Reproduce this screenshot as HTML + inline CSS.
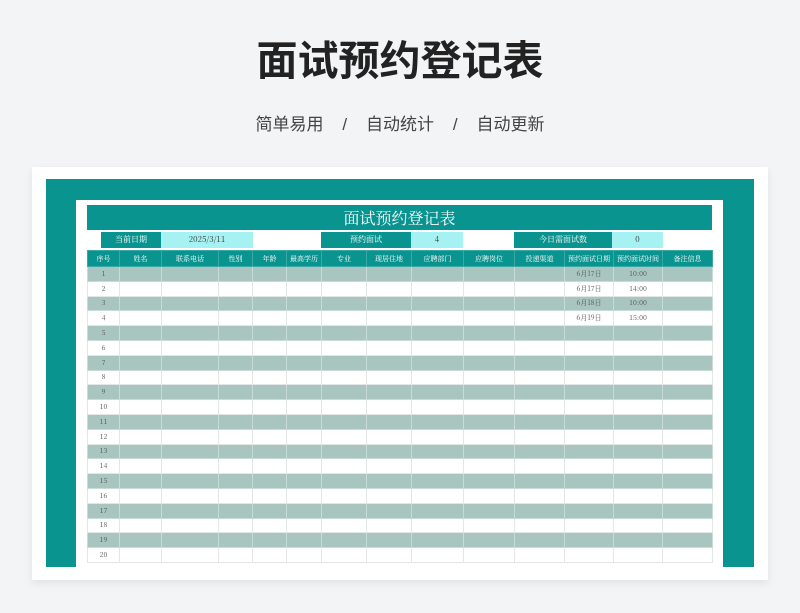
<!DOCTYPE html>
<html><head><meta charset="utf-8"><style>
*{margin:0;padding:0;box-sizing:border-box}
body{width:800px;height:613px;background:#f3f4f6;position:relative;overflow:hidden;font-family:"Liberation Sans","Noto Sans CJK SC",sans-serif}
.t{position:absolute;left:0;width:800px;text-align:center;top:36px;font-size:41px;font-weight:bold;color:#222;line-height:50px;letter-spacing:0px}
.s{position:absolute;left:0;width:800px;text-align:center;top:113px;font-size:17px;color:#444;line-height:24px;word-spacing:0}
.card{position:absolute;left:32px;top:167px;width:736px;height:413px;background:#fff;box-shadow:0 3px 8px rgba(0,0,0,.08)}
.teal{position:absolute;left:46px;top:179px;width:708px;height:388px;background:#0a9490}
.inner{position:absolute;left:76px;top:200px;width:647px;height:380px;background:#fff}
.tb{position:absolute;left:87px;top:205px;width:625px;height:25px;background:#0a9490;color:#fff;font-family:"Noto Serif CJK SC",serif;font-size:16px;text-align:center;line-height:25px}
.b{position:absolute;top:232px;height:16px;font-size:8px;line-height:16px;text-align:center;font-family:"Noto Serif CJK SC",serif}
.d{background:#0a9490;color:#fff}.c{background:#a6f2f2;color:#333}
table{position:absolute;left:87px;top:250px;border-collapse:collapse;table-layout:fixed;width:625px;font-family:"Noto Serif CJK SC",serif;font-size:7px;color:#555}
td,th{border:1px solid #e2e6e5;text-align:center;height:14.8px;padding:0;white-space:nowrap;overflow:hidden}
th{background:#0a9490;color:#fff;font-weight:normal;height:16px;border-color:#3aa9a5}
tr.g td{background:#a8c6bf;border-color:#c8dcd7}
</style></head><body>
<div class="t">面试预约登记表</div>
<div class="s">简单易用 &nbsp;&nbsp;&nbsp;/&nbsp;&nbsp;&nbsp; 自动统计 &nbsp;&nbsp;&nbsp;/&nbsp;&nbsp;&nbsp; 自动更新</div>
<div class="card"></div>
<div class="teal"></div>
<div class="inner"></div>
<div class="tb">面试预约登记表</div>
<div class="b d" style="left:101px;width:60px">当前日期</div>
<div class="b c" style="left:161px;width:92px">2025/3/11</div>
<div class="b d" style="left:321px;width:90px">预约面试</div>
<div class="b c" style="left:411px;width:52px">4</div>
<div class="b d" style="left:514px;width:98px">今日需面试数</div>
<div class="b c" style="left:612px;width:51px">0</div>
<table>
<colgroup><col style="width:32px"><col style="width:42px"><col style="width:57px"><col style="width:34px"><col style="width:34px"><col style="width:35px"><col style="width:45px"><col style="width:45px"><col style="width:52px"><col style="width:51px"><col style="width:50px"><col style="width:49px"><col style="width:49px"><col style="width:50px"></colgroup>
<tr><th>序号</th><th>姓名</th><th>联系电话</th><th>性别</th><th>年龄</th><th>最高学历</th><th>专业</th><th>现居住地</th><th>应聘部门</th><th>应聘岗位</th><th>投递渠道</th><th>预约面试日期</th><th>预约面试时间</th><th>备注信息</th></tr>
<tr class="g"><td>1</td><td></td><td></td><td></td><td></td><td></td><td></td><td></td><td></td><td></td><td></td><td>6月17日</td><td>10:00</td><td></td></tr>
<tr><td>2</td><td></td><td></td><td></td><td></td><td></td><td></td><td></td><td></td><td></td><td></td><td>6月17日</td><td>14:00</td><td></td></tr>
<tr class="g"><td>3</td><td></td><td></td><td></td><td></td><td></td><td></td><td></td><td></td><td></td><td></td><td>6月18日</td><td>10:00</td><td></td></tr>
<tr><td>4</td><td></td><td></td><td></td><td></td><td></td><td></td><td></td><td></td><td></td><td></td><td>6月19日</td><td>15:00</td><td></td></tr>
<tr class="g"><td>5</td><td></td><td></td><td></td><td></td><td></td><td></td><td></td><td></td><td></td><td></td><td></td><td></td><td></td></tr>
<tr><td>6</td><td></td><td></td><td></td><td></td><td></td><td></td><td></td><td></td><td></td><td></td><td></td><td></td><td></td></tr>
<tr class="g"><td>7</td><td></td><td></td><td></td><td></td><td></td><td></td><td></td><td></td><td></td><td></td><td></td><td></td><td></td></tr>
<tr><td>8</td><td></td><td></td><td></td><td></td><td></td><td></td><td></td><td></td><td></td><td></td><td></td><td></td><td></td></tr>
<tr class="g"><td>9</td><td></td><td></td><td></td><td></td><td></td><td></td><td></td><td></td><td></td><td></td><td></td><td></td><td></td></tr>
<tr><td>10</td><td></td><td></td><td></td><td></td><td></td><td></td><td></td><td></td><td></td><td></td><td></td><td></td><td></td></tr>
<tr class="g"><td>11</td><td></td><td></td><td></td><td></td><td></td><td></td><td></td><td></td><td></td><td></td><td></td><td></td><td></td></tr>
<tr><td>12</td><td></td><td></td><td></td><td></td><td></td><td></td><td></td><td></td><td></td><td></td><td></td><td></td><td></td></tr>
<tr class="g"><td>13</td><td></td><td></td><td></td><td></td><td></td><td></td><td></td><td></td><td></td><td></td><td></td><td></td><td></td></tr>
<tr><td>14</td><td></td><td></td><td></td><td></td><td></td><td></td><td></td><td></td><td></td><td></td><td></td><td></td><td></td></tr>
<tr class="g"><td>15</td><td></td><td></td><td></td><td></td><td></td><td></td><td></td><td></td><td></td><td></td><td></td><td></td><td></td></tr>
<tr><td>16</td><td></td><td></td><td></td><td></td><td></td><td></td><td></td><td></td><td></td><td></td><td></td><td></td><td></td></tr>
<tr class="g"><td>17</td><td></td><td></td><td></td><td></td><td></td><td></td><td></td><td></td><td></td><td></td><td></td><td></td><td></td></tr>
<tr><td>18</td><td></td><td></td><td></td><td></td><td></td><td></td><td></td><td></td><td></td><td></td><td></td><td></td><td></td></tr>
<tr class="g"><td>19</td><td></td><td></td><td></td><td></td><td></td><td></td><td></td><td></td><td></td><td></td><td></td><td></td><td></td></tr>
<tr><td>20</td><td></td><td></td><td></td><td></td><td></td><td></td><td></td><td></td><td></td><td></td><td></td><td></td><td></td></tr>
</table>
</body></html>
